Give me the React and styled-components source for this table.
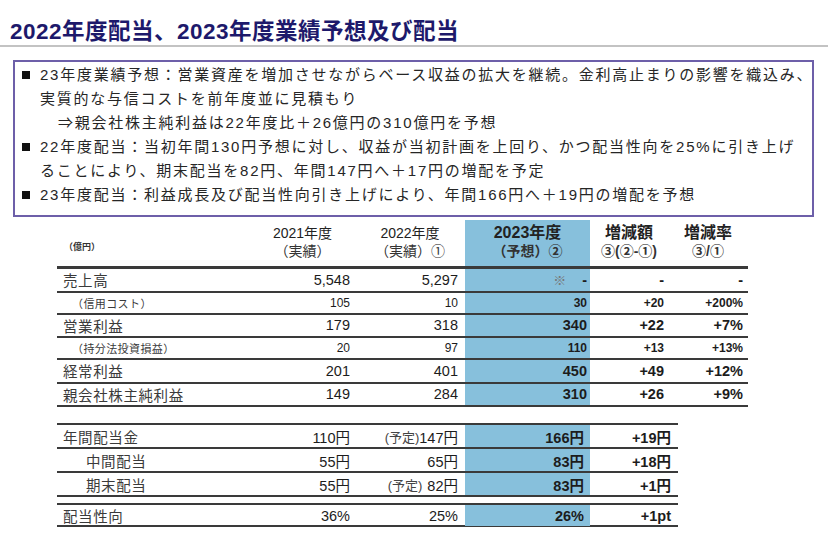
import React from "react";
import styled, { createGlobalStyle } from "styled-components";

const GlobalStyle = createGlobalStyle`
  body {
    margin: 0;
    background: #fff;
    font-family: "Liberation Sans", "Noto Sans CJK JP", sans-serif;
    color: #222;
  }
`;

const COLS_RESULT = "193px 105px 110px 125px 78px 80px";
const COLS_DIVIDEND = "193px 105px 110px 125px 88px";
const BLUE = "#87c0dc";

const Page = styled.div`
  width: 828px;
  height: 538px;
  overflow: hidden;
  display: flex;
  flex-direction: column;
`;

const Title = styled.h1`
  margin: 0;
  padding: 19px 0 0 10px;
  height: 26px;
  font-size: 22.5px;
  font-weight: 700;
  letter-spacing: 0.5px;
  line-height: 26px;
  color: #1d196b;
`;

const Rule = styled.div`
  height: 2px;
  background: #c3c3c3;
`;

const Summary = styled.div`
  margin: 13px 14px 0 13px;
  border: 2px solid #6d5fa9;
  padding: 1px 0 8px 7px;
  font-size: 15px;
  line-height: 24px;
  letter-spacing: 1.75px;
  color: #262626;
  white-space: nowrap;
`;

const Point = styled.div`
  display: flex;
  align-items: flex-start;
`;

const Square = styled.span`
  flex: none;
  width: 8px;
  height: 8px;
  margin: 8px 10px 0 0;
  background: #111;
`;

const Sub = styled.div`
  padding-left: ${(p) => p.$indent}px;
`;

const Tables = styled.div`
  margin: 3px 0 0 57px;
  display: flex;
  flex-direction: column;
  gap: 16px;
`;

const Block = styled.div`
  width: ${(p) => p.$w}px;
  border-top: ${(p) => (p.$top ? "2px solid #3a3a3a" : "none")};
  margin-top: ${(p) => p.$mt || 0}px;
`;

const Row = styled.div`
  display: grid;
  grid-template-columns: ${(p) => p.$cols};
  height: ${(p) => p.$h}px;
  border-bottom: ${(p) => p.$line || 2}px solid #3a3a3a;
`;

const Label = styled.div`
  display: flex;
  align-items: center;
  padding-left: ${(p) => p.$indent || 6}px;
  font-size: ${(p) => (p.$small ? 11 : 14.5)}px;
  letter-spacing: ${(p) => (p.$small ? 0.4 : 0.6)}px;
  color: #3a3a3a;
`;

const Unit = styled.div`
  display: flex;
  align-items: center;
  padding: 6px 0 0 7px;
  font-size: 9px;
  font-weight: 700;
  color: #333;
`;

const Num = styled.div`
  display: flex;
  align-items: center;
  justify-content: flex-end;
  padding-right: ${(p) => p.$pr}px;
  background: ${(p) => (p.$blue ? BLUE : "transparent")};
  font-size: ${(p) => (p.$small ? 12 : 14.5)}px;
  font-weight: ${(p) => (p.$bold ? 700 : 400)};
  color: #1c1c1c;
  white-space: nowrap;
`;

const Note = styled.span`
  font-size: 13px;
  color: #444;
  margin-right: ${(p) => p.$gap || 0}px;
`;

const Mark = styled.span`
  color: #777;
  font-weight: 400;
  margin-right: 16px;
  font-size: 13px;
`;

const Head = styled.div`
  display: flex;
  flex-direction: column;
  align-items: center;
  justify-content: center;
  padding-bottom: 2px;
  background: ${(p) => (p.$blue ? BLUE : "transparent")};
  font-weight: ${(p) => (p.$bold ? 700 : 400)};
  color: #222;
`;

const HeadTop = styled.span`
  font-size: ${(p) => (p.$big ? 16 : 14)}px;
  line-height: 18px;
`;

const HeadSub = styled.span`
  font-size: 14px;
  line-height: 18px;
  color: #333;
`;

const results = [
  { label: "売上高", v: ["5,548", "5,297"], f: "-", d: ["-", "-"], mark: true },
  { label: "（信用コスト）", sub: true, v: ["105", "10"], f: "30", d: ["+20", "+200%"] },
  { label: "営業利益", v: ["179", "318"], f: "340", d: ["+22", "+7%"] },
  { label: "（持分法投資損益）", sub: true, v: ["20", "97"], f: "110", d: ["+13", "+13%"] },
  { label: "経常利益", v: ["201", "401"], f: "450", d: ["+49", "+12%"] },
  { label: "親会社株主純利益", v: ["149", "284"], f: "310", d: ["+26", "+9%"] },
];

const dividends = [
  { label: "年間配当金", indent: 6, v: ["110円", "147円"], plan: true, f: "166円", d: "+19円" },
  { label: "中間配当", indent: 29, v: ["55円", "65円"], f: "83円", d: "+18円" },
  { label: "期末配当", indent: 29, v: ["55円", "82円"], plan: true, space: true, f: "83円", d: "+1円" },
];

const App = () => {
  return (
    <Page>
      <GlobalStyle />
      <Title>2022年度配当、2023年度業績予想及び配当</Title>
      <Rule />
      <Summary>
        <Point>
          <Square />
          <div>
            23年度業績予想：営業資産を増加させながらベース収益の拡大を継続。金利高止まりの影響を織込み、
            <br />
            実質的な与信コストを前年度並に見積もり
            <Sub $indent={18}>⇒親会社株主純利益は22年度比＋26億円の310億円を予想</Sub>
          </div>
        </Point>
        <Point>
          <Square />
          <div>
            22年度配当：当初年間130円予想に対し、収益が当初計画を上回り、かつ配当性向を25%に引き上げ
            <br />
            ることにより、期末配当を82円、年間147円へ＋17円の増配を予定
          </div>
        </Point>
        <Point>
          <Square />
          <div>23年度配当：利益成長及び配当性向引き上げにより、年間166円へ＋19円の増配を予想</div>
        </Point>
      </Summary>

      <Tables>
        <Block $w={691}>
          <Row $cols={COLS_RESULT} $h={46} $line={3}>
            <Unit>（億円）</Unit>
            <Head>
              <HeadTop>2021年度</HeadTop>
              <HeadSub>（実績）</HeadSub>
            </Head>
            <Head>
              <HeadTop>2022年度</HeadTop>
              <HeadSub>（実績）①</HeadSub>
            </Head>
            <Head $blue $bold>
              <HeadTop $big>2023年度</HeadTop>
              <HeadSub>（予想）②</HeadSub>
            </Head>
            <Head $bold>
              <HeadTop $big>増減額</HeadTop>
              <HeadSub>③(②-①)</HeadSub>
            </Head>
            <Head $bold>
              <HeadTop $big>増減率</HeadTop>
              <HeadSub>③/①</HeadSub>
            </Head>
          </Row>
          {results.map((r) => (
            <Row key={r.label} $cols={COLS_RESULT} $h={r.sub ? 20 : 21.5}>
              <Label $small={r.sub} $indent={r.sub ? 15 : 6}>
                {r.label}
              </Label>
              <Num $pr={5} $small={r.sub}>{r.v[0]}</Num>
              <Num $pr={7} $small={r.sub}>{r.v[1]}</Num>
              <Num $pr={3} $blue $bold $small={r.sub}>
                {r.mark && <Mark>※</Mark>}
                {r.f}
              </Num>
              <Num $pr={4} $bold $small={r.sub}>{r.d[0]}</Num>
              <Num $pr={5} $bold $small={r.sub}>{r.d[1]}</Num>
            </Row>
          ))}
        </Block>

        <div>
          <Block $w={621} $top>
            {dividends.map((r) => (
              <Row key={r.label} $cols={COLS_DIVIDEND} $h={22}>
                <Label $indent={r.indent}>{r.label}</Label>
                <Num $pr={5}>{r.v[0]}</Num>
                <Num $pr={7}>
                  {r.plan && <Note $gap={r.space ? 5 : 0}>(予定)</Note>}
                  {r.v[1]}
                </Num>
                <Num $pr={6} $blue $bold>{r.f}</Num>
                <Num $pr={7} $bold>{r.d}</Num>
              </Row>
            ))}
          </Block>
          <Block $w={621} $top $mt={6}>
            <Row $cols={COLS_DIVIDEND} $h={20}>
              <Label>配当性向</Label>
              <Num $pr={5}>36%</Num>
              <Num $pr={7}>25%</Num>
              <Num $pr={6} $blue $bold>26%</Num>
              <Num $pr={7} $bold>+1pt</Num>
            </Row>
          </Block>
        </div>
      </Tables>
    </Page>
  );
};

export default App;
